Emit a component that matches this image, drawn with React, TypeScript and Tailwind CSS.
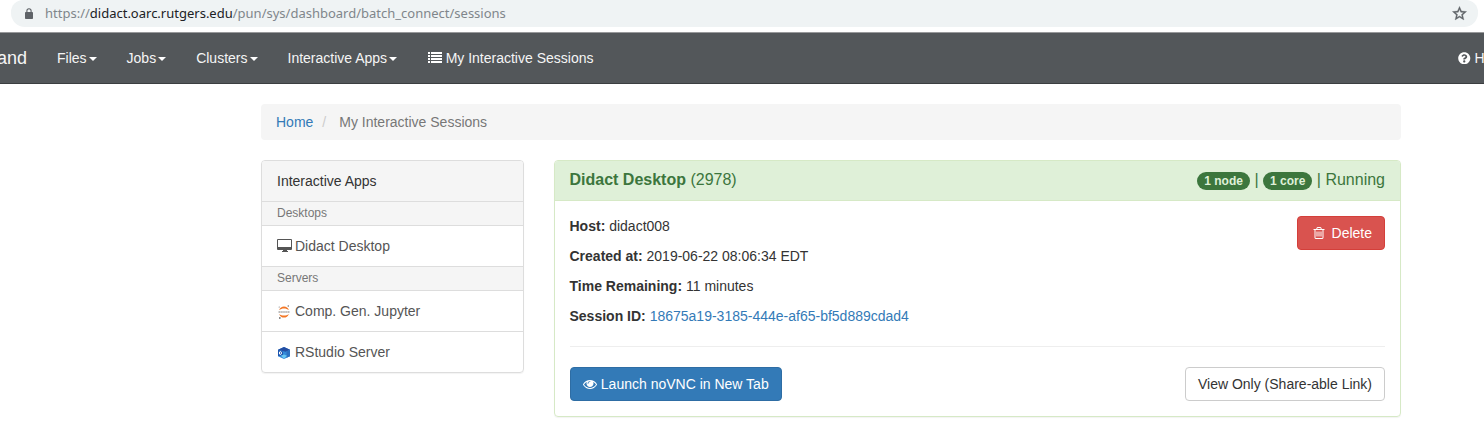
import type { ReactNode } from 'react';
import { FaQuestionCircle } from 'react-icons/fa';

function LockIcon() {
  return (
    <svg viewBox="0 0 8 11" className="mr-3 ml-[3px] h-[11px] w-[8px] text-[#5f6368]">
      <rect x="0" y="4" width="8" height="7" rx="0.8" fill="currentColor" />
      <path d="M1.900 4.500V2.800a2.100 2.100 0 0 1 4.200 0v1.700" fill="none" stroke="currentColor" strokeWidth="1.100" />
    </svg>
  );
}

function StarIcon() {
  return (
    <svg viewBox="0 0 24 24" className="ml-auto h-[17px] w-[17px] text-[#5f6368]" fill="currentColor" stroke="currentColor" strokeWidth="0.5">
      <path d="M22 9.240l-7.190-.62L12 2 9.190 8.630 2 9.240l5.460 4.730L5.820 21 12 17.270 18.180 21l-1.630-7.030L22 9.240zM12 15.400l-3.760 2.270 1-4.280-3.320-2.880 4.380-.38L12 6.100l1.710 4.040 4.380.38-3.320 2.880 1 4.280L12 15.400z" />
    </svg>
  );
}

function Caret() {
  return (
    <span className="ml-[2px] inline-block h-0 w-0 border-x-4 border-t-4 border-x-transparent border-t-white align-middle" />
  );
}

function ListIcon() {
  return (
    <svg viewBox="0 0 14 11" className="mr-1 inline-block h-[11px] w-[14px] align-[0px]" fill="#fff" shapeRendering="crispEdges">
      <path d="M0 0h2v2H0zM3 0h11v2H3zM0 3h2v2H0zM3 3h11v2H3zM0 6h2v2H0zM3 6h11v2H3zM0 9h2v2H0zM3 9h11v2H3z" />
    </svg>
  );
}

function DesktopIcon() {
  return (
    <svg viewBox="0 0 15 13" className="mb-px h-[13px] w-[15px]" fill="currentColor">
      <path fillRule="evenodd" d="M1 0h13a1 1 0 0 1 1 1v9a1 1 0 0 1-1 1H10v1h1v1H5v-1h1v-1H1a1 1 0 0 1-1-1V1a1 1 0 0 1 1-1zm0 1v7h13V1z" />
    </svg>
  );
}

function JupyterIcon() {
  return (
    <svg viewBox="0 0 14 14" className="mt-px h-[14px] w-[14px]">
      <path d="M2.100 5.100C2.900 2.700 4.800 1.500 7 1.500s4.100 1.200 4.900 3.600C10.400 3.900 8.800 3.400 7 3.400s-3.400.5-4.900 1.700z" fill="#f37726" />
      <path d="M2.100 8.900C2.900 11.300 4.800 12.500 7 12.500s4.100-1.200 4.900-3.600c-1.500 1.200-3.100 1.700-4.900 1.700s-3.400-.5-4.900-1.700z" fill="#f37726" />
      <path d="M1.500 7h11" stroke="#a8a8a8" strokeWidth="1.600" strokeDasharray="1.500 .4" />
      <circle cx="11.300" cy="1" r=".8" fill="#767677" />
      <circle cx="2.200" cy="2" r=".55" fill="#767677" />
      <circle cx="2.800" cy="13" r=".9" fill="#767677" />
    </svg>
  );
}

function RStudioIcon() {
  return (
    <svg viewBox="0 0 14 14" className="mt-px h-[14px] w-[14px]">
      <path d="M7 1l6 2.800v6.400L7 13l-6-2.800V3.800z" fill="#3289d8" />
      <path d="M7 1l6 2.800-4.500 2L1 3.800z" fill="#244da2" />
      <path d="M1 3.800l5 2V9L1 10.200z" fill="#1e56b0" />
      <path d="M13 3.800v6.400L9.500 11.800V5.500z" fill="#2a70c2" />
      <path d="M4 9.800l3-1.300 3 1.300-3 3z" fill="#67c6f2" />
      <ellipse cx="3.400" cy="7" rx="1" ry="1.500" fill="#1e56b0" stroke="#fff" strokeWidth="1" />
    </svg>
  );
}

function EyeIcon() {
  return (
    <svg viewBox="0 0 1792 1792" className="mr-[3.5px] inline-block h-[14px] w-[14px] align-[-2px]" fill="currentColor">
      <path d="M1664 960q-152-236-381-353 61 104 61 225 0 185-131.5 316.5t-316.5 131.5-316.5-131.5-131.5-316.5q0-121 61-225-229 117-381 353 133 205 333.5 326.5t434.5 121.5 434.5-121.5 333.5-326.5zm-720-384q0-20-14-34t-34-14q-125 0-214.5 89.5t-89.5 214.5q0 20 14 34t34 14 34-14 14-34q0-86 61-147t147-61q20 0 34-14t14-34zm848 384q0 34-20 69-140 230-376.5 368.5t-499.5 138.5-499.5-139-376.5-368q-20-35-20-69t20-69q140-229 376.5-368t499.5-139 499.5 139 376.5 368q20 35 20 69z" />
    </svg>
  );
}

function TrashIcon() {
  return (
    <svg viewBox="0 0 1792 1792" className="mr-[6px] ml-[2px] inline-block h-[14px] w-[14px] align-[-2px]" fill="currentColor">
      <path d="M704 736v576q0 14-9 23t-23 9h-64q-14 0-23-9t-9-23v-576q0-14 9-23t23-9h64q14 0 23 9t9 23zm256 0v576q0 14-9 23t-23 9h-64q-14 0-23-9t-9-23v-576q0-14 9-23t23-9h64q14 0 23 9t9 23zm256 0v576q0 14-9 23t-23 9h-64q-14 0-23-9t-9-23v-576q0-14 9-23t23-9h64q14 0 23 9t9 23zm128 724v-948h-896v948q0 22 7 40.500t14.500 27 10.500 8.500h832q3 0 10.500-8.500t14.500-27 7-40.500zm-672-1076h448l-48-117q-7-9-17-11h-317q-10 2-17 11zm928 32v64q0 14-9 23t-23 9h-96v948q0 83-47 143.500t-113 60.500h-832q-66 0-113-58.500t-47-141.500v-952h-96q-14 0-23-9t-9-23v-64q0-14 9-23t23-9h309l70-167q15-37 54-63t79-26h320q40 0 79 26t54 63l70 167h309q14 0 23 9t9 23z" />
    </svg>
  );
}

function NavItem({ label }: { label: string }) {
  return (
    <a className="px-[15px]">
      {label}
      <Caret />
    </a>
  );
}

function GroupHeader({ children }: { children: ReactNode }) {
  return <div className="h-6 border-t border-[#ddd] bg-[#f5f5f5] px-[15px] text-xs leading-[22px] text-[#777]">{children}</div>;
}

function AppLink({ icon, children }: { icon: ReactNode; children: ReactNode }) {
  return (
    <a className="flex h-[41px] items-center border-t border-[#ddd] px-[15px] text-[#555]">
      <span className="mr-[3px] flex w-[15px]">{icon}</span>
      {children}
    </a>
  );
}

function Detail({ label, children }: { label: string; children: ReactNode }) {
  return (
    <p className="mb-[10px]">
      <strong>{label}:</strong> {children}
    </p>
  );
}

function Badge({ children }: { children: ReactNode }) {
  return (
    <span className="inline-block rounded-[10px] bg-[#3c763d] px-[7px] py-[3px] text-center align-middle text-xs leading-3 font-bold whitespace-nowrap text-[#dff0d8]">
      {children}
    </span>
  );
}

export default function App() {
  return (
    <div className="h-[444px] w-full overflow-hidden bg-white font-['Liberation_Sans',Arial,sans-serif] text-sm leading-5 text-[#333]">
      <div className="h-8 pr-[6px] pl-[11px]">
        <div className="flex h-[27px] items-center rounded-b-[14px] rounded-t-[12px] bg-[#eff3f4] pr-[10px] pb-px pl-[11px] font-['Noto_Sans',sans-serif] text-[13px] text-[#80868b]">
          <LockIcon />
          <span className="whitespace-nowrap">
            https://<span className="text-[#202124]">didact.oarc.rutgers.edu</span>/pun/sys/dashboard/batch_connect/sessions
          </span>
          <StarIcon />
        </div>
      </div>

      <nav className="flex h-[52px] items-center justify-between overflow-hidden border-t border-b border-t-[#98999b] border-b-[#3b3e40] bg-[#53575a] whitespace-nowrap text-[#f5f5f5]">
        <div className="flex items-center">
          <span className="flex w-[27px] justify-end text-lg leading-5">and</span>
          <div className="ml-[15px] flex">
            <NavItem label="Files" />
            <NavItem label="Jobs" />
            <NavItem label="Clusters" />
            <NavItem label="Interactive Apps" />
            <a className="pr-[15px] pl-[15.5px]">
              <ListIcon />
              My Interactive Sessions
            </a>
          </div>
        </div>
        <a className="flex w-[26px] shrink-0 items-center">
          <FaQuestionCircle className="mr-1 h-[12.5px] w-[12.5px] shrink-0 text-white" />
          H
        </a>
      </nav>

      <main className="mt-5 ml-[261px] w-[1140px]">
        <div className="mb-5 h-9 rounded bg-[#f5f5f5] px-[15px] py-2">
          <a className="text-[#337ab7]">Home</a>
          <span className="px-[9px] text-[#ccc]">/</span>
          <span className="pl-[4px] text-[#777]">My Interactive Sessions</span>
        </div>

        <div className="flex items-start gap-[30px]">
          <aside className="w-[263px] shrink-0 overflow-hidden rounded border border-[#ddd] shadow-[0_1px_1px_rgba(0,0,0,0.05)]">
            <div className="h-10 bg-[#f5f5f5] px-[15px] leading-10">Interactive Apps</div>
            <GroupHeader>Desktops</GroupHeader>
            <AppLink icon={<DesktopIcon />}>Didact Desktop</AppLink>
            <GroupHeader>Servers</GroupHeader>
            <AppLink icon={<JupyterIcon />}>Comp. Gen. Jupyter</AppLink>
            <AppLink icon={<RStudioIcon />}>RStudio Server</AppLink>
          </aside>

          <section className="h-[257px] w-[847px] overflow-hidden rounded border border-[#d6e9c6] shadow-[0_1px_1px_rgba(0,0,0,0.05)]">
            <div className="flex h-10 justify-between border-b border-[#d6e9c6] bg-[#dff0d8] pr-[15px] pl-[14.5px] text-base leading-[18px] text-[#3c763d]">
              <span className="pt-[10px]">
                <strong>Didact Desktop</strong> (2978)
              </span>
              <span className="pt-[10px]">
                <Badge>1 node</Badge> | <Badge>1 core</Badge> | Running
              </span>
            </div>
            <div className="px-[15px] pt-[15px]">
              <div className="flex items-start justify-between">
                <div className="-ml-[0.5px]">
                  <Detail label="Host">didact008</Detail>
                  <Detail label="Created at">2019-06-22 08:06:34 EDT</Detail>
                  <Detail label="Time Remaining">11 minutes</Detail>
                  <Detail label="Session ID">
                    <a className="text-[#337ab7]">18675a19-3185-444e-af65-bf5d889cdad4</a>
                  </Detail>
                </div>
                <button className="h-[34px] rounded border border-[#d43f3a] bg-[#d9534f] px-3 whitespace-nowrap text-white">
                  <TrashIcon />
                  Delete
                </button>
              </div>
              <hr className="mt-[10px] mb-5 border-[#eee]" />
              <div className="flex justify-between">
                <button className="h-[34px] w-[212px] rounded border border-[#2e6da4] bg-[#337ab7] text-center whitespace-nowrap text-white">
                  <EyeIcon />
                  Launch noVNC in New Tab
                </button>
                <button className="h-[34px] rounded border border-[#ccc] bg-white px-3 whitespace-nowrap">
                  View Only (Share-able Link)
                </button>
              </div>
            </div>
          </section>
        </div>
      </main>
    </div>
  );
}
